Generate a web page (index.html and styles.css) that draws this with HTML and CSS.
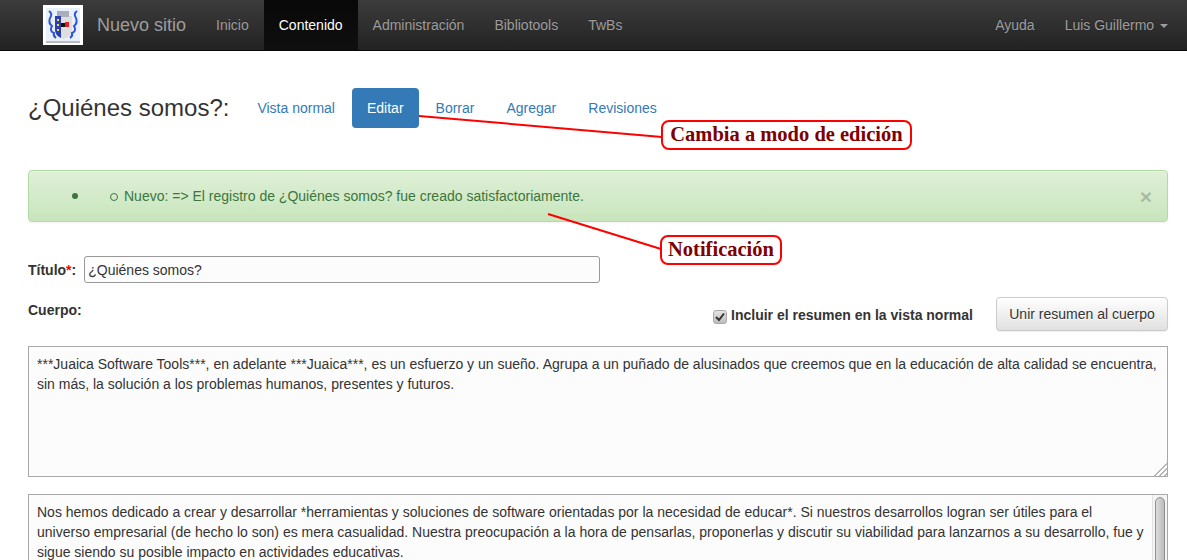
FILE: index.html
```html
<!doctype html>
<html lang="es">
  <head>
    <meta charset="UTF-8" />
    <meta name="viewport" content="width=device-width, initial-scale=1.0" />
    <title>¿Quiénes somos?</title>
    <link rel="stylesheet" href="styles.css">
  </head>

  <body>
    <nav class="navbar">
      <a class="brand" href="#">
        <svg class="logo" width="40" height="40" viewBox="0 0 40 40">
          <rect width="40" height="40" fill="#fff" />
          <rect x="3" y="3" width="34" height="33" fill="#e8f0fb" />
          <rect x="3" y="36" width="34" height="2" fill="#bdbdbd" />
          <path d="M12 11h17v14q0 6-8.500 9q-8.500-3-8.500-9z" fill="#dedede" />
          <path d="M14 6h12v6h-12z" fill="#a9aeb8" />
          <path d="M12 11h6v22q-6-3-6-8z" fill="#2a3fb0" />
          <rect x="14" y="14" width="2" height="2" fill="#f3df3a" />
          <rect x="14" y="19" width="2" height="2" fill="#f3df3a" />
          <rect x="14" y="24" width="2" height="2" fill="#f3df3a" />
          <rect x="18" y="18" width="4" height="4" fill="#111" />
          <rect x="22" y="17" width="4" height="5" fill="#e02020" />
          <path d="M6 6q4 3 1 7q-2 5 2 8q-3 5 2 7q-1 3 2 5" fill="none" stroke="#2f55d4" stroke-width="2" />
          <path d="M34 6q-4 3-1 7q2 5-2 8q3 5-2 7q1 3-2 5" fill="none" stroke="#2f55d4" stroke-width="2" />
        </svg>
        <span class="brand-name">Nuevo sitio</span>
      </a>
      <ul class="nav-links">
        <li><a href="#">Inicio</a></li>
        <li class="active"><a href="#">Contenido</a></li>
        <li><a href="#">Administración</a></li>
        <li><a href="#">Bibliotools</a></li>
        <li><a href="#">TwBs</a></li>
      </ul>
      <ul class="nav-links nav-right">
        <li><a href="#">Ayuda</a></li>
        <li><a href="#">Luis Guillermo <span class="caret"></span></a></li>
      </ul>
    </nav>

    <main class="page">
      <div class="title-row">
        <h1>¿Quiénes somos?:</h1>
        <ul class="pills">
          <li><a href="#">Vista normal</a></li>
          <li class="active"><a href="#">Editar</a></li>
          <li><a href="#">Borrar</a></li>
          <li><a href="#">Agregar</a></li>
          <li><a href="#">Revisiones</a></li>
        </ul>
      </div>

      <div class="alert">
        <ul>
          <li>
            <ul>
              <li>Nuevo: =&gt; El registro de ¿Quiénes somos? fue creado satisfactoriamente.</li>
            </ul>
          </li>
        </ul>
        <span class="close">×</span>
      </div>

      <div class="field-title">
        <label for="titulo">Título<span class="req">*</span>:</label>
        <input id="titulo" type="text" value="¿Quiénes somos?">
      </div>

      <div class="field-body">
        <label class="body-label">Cuerpo:</label>
        <label class="check">
          <span class="checkbox">
            <svg width="10" height="10" viewBox="0 0 10 10">
              <path d="M1 5l3 3l5-6.500" fill="none" stroke="#333" stroke-width="2" />
            </svg>
          </span>
          Incluir el resumen en la vista normal
        </label>
        <button class="btn" type="button">Unir resumen al cuerpo</button>
      </div>

      <div class="summary-wrap">
        <textarea class="summary">***Juaica Software Tools***, en adelante ***Juaica***, es un esfuerzo y un sueño. Agrupa a un puñado de alusinados que creemos que en la educación de alta calidad se encuentra, sin más, la solución a los problemas humanos, presentes y futuros.</textarea>
        <span class="grip"></span>
      </div>

      <div class="body-box">
        <p>Nos hemos dedicado a crear y desarrollar *herramientas y soluciones de software orientadas por la necesidad de educar*. Si nuestros desarrollos logran ser útiles para el universo empresarial (de hecho lo son) es mera casualidad. Nuestra preocupación a la hora de pensarlas, proponerlas y discutir su viabilidad para lanzarnos a su desarrollo, fue y sigue siendo su posible impacto en actividades educativas.</p>
        <div class="scroll-track"><div class="scroll-thumb"></div></div>
      </div>
    </main>

    <!-- anotaciones sobre la captura -->
    <svg class="arrows" width="1187" height="560">
      <line x1="419" y1="116" x2="662" y2="137" />
      <line x1="548" y1="214" x2="661" y2="249" />
    </svg>
    <div class="note note-edit">Cambia a modo de edición</div>
    <div class="note note-alert">Notificación</div>
  </body>
</html>
```

FILE: styles.css
```css
* {
  box-sizing: border-box;
}

html,
body {
  height: 560px;
  overflow: hidden;
}

body {
  margin: 0;
  position: relative;
  font-family: "Liberation Sans", Arial, sans-serif;
  font-size: 14px;
  line-height: 20px;
  color: #333;
  background-color: #fff;
}

a {
  text-decoration: none;
}

ul {
  margin: 0;
  padding: 0;
}

/* barra superior */
.navbar {
  display: flex;
  height: 51px;
  padding: 0 4px 0 28px;
  background-image: linear-gradient(to bottom, #3c3c3c 0, #222 100%);
  border-bottom: 1px solid #080808;
}

.brand {
  display: flex;
  align-items: center;
  height: 50px;
  padding: 0 15px;
  color: #9d9d9d;
}

.logo {
  display: block;
  margin-right: 14px;
}

.brand-name {
  font-size: 18px;
}

.nav-links {
  display: flex;
  list-style: none;
}

.nav-links a {
  display: block;
  height: 50px;
  padding: 15px;
  color: #9d9d9d;
  text-shadow: 0 -1px 0 rgba(0, 0, 0, 0.25);
}

.nav-links .active a {
  color: #fff;
  background-image: linear-gradient(to bottom, #080808 0, #0f0f0f 100%);
}

.nav-right {
  margin-left: auto;
}

.caret {
  display: inline-block;
  width: 0;
  height: 0;
  margin-left: 2px;
  vertical-align: middle;
  border-top: 4px solid;
  border-right: 4px solid transparent;
  border-left: 4px solid transparent;
}

/* contenido */
.page {
  padding: 37px 19px 0 28px;
}

.title-row {
  display: flex;
  align-items: center;
  gap: 13px;
  height: 40px;
}

h1 {
  margin: 0;
  font-size: 24px;
  font-weight: 400;
  line-height: 40px;
}

.pills {
  display: flex;
  gap: 2px;
  list-style: none;
}

.pills a {
  display: block;
  height: 40px;
  padding: 10px 15px;
  border-radius: 4px;
  color: #337ab7;
}

.pills .active a {
  color: #fff;
  background-color: #337ab7;
}

.alert {
  position: relative;
  height: 52px;
  margin-top: 42px;
  padding: 15px;
  color: #3c763d;
  background-image: linear-gradient(to bottom, #dff0d8 0, #c8e5bc 100%);
  border: 1px solid #b2dba1;
  border-radius: 4px;
  box-shadow: inset 0 1px 0 rgba(255, 255, 255, 0.25), 0 1px 2px rgba(0, 0, 0, 0.05);
}

.alert ul {
  padding-left: 40px;
  list-style: none;
}

.alert li {
  position: relative;
}

.alert li::before {
  content: "";
  position: absolute;
  top: 7px;
  left: -12px;
  width: 6px;
  height: 6px;
  background-color: #3c763d;
  border-radius: 50%;
}

.alert li li::before {
  left: -14px;
  background-color: transparent;
  border: 1px solid #3c763d;
}

.close {
  position: absolute;
  top: 16px;
  right: 15px;
  font-size: 21px;
  font-weight: 700;
  color: #000;
  opacity: 0.2;
}

.field-title {
  display: flex;
  align-items: center;
  gap: 8px;
  margin-top: 34px;
}

label {
  font-weight: 700;
}

.req {
  color: #f00;
}

input[type="text"] {
  width: 516px;
  height: 27px;
  padding: 1px 3px;
  font: inherit;
  color: #333;
  background-color: #fcfcfc;
  border: 1px solid #999;
  border-radius: 3px;
}

.field-body {
  display: flex;
  margin-top: 14px;
}

.body-label {
  flex: 1;
  padding-top: 3px;
}

.check {
  display: flex;
  align-items: center;
  gap: 4px;
  margin: 8px 23px 0 0;
  height: 20px;
}

.checkbox {
  display: flex;
  align-items: center;
  justify-content: center;
  width: 14px;
  height: 14px;
  margin-top: 3px;
  background-image: linear-gradient(to bottom, #e4e4e4, #bdbdbd);
  border: 1px solid #aaa;
  border-radius: 3px;
}

.btn {
  width: 172px;
  height: 34px;
  padding: 0;
  font: inherit;
  color: #333;
  background-image: linear-gradient(to bottom, #fff 0, #e0e0e0 100%);
  border: 1px solid #ccc;
  border-radius: 4px;
  box-shadow: inset 0 1px 0 rgba(255, 255, 255, 0.15), 0 1px 1px rgba(0, 0, 0, 0.075);
  text-shadow: 0 1px 0 #fff;
}

.summary-wrap {
  position: relative;
  margin-top: 15px;
}

.summary {
  display: block;
  width: 100%;
  height: 131px;
  padding: 7px 8px;
  font: inherit;
  color: #333;
  background-color: #fcfcfc;
  border: 1px solid #a9a9a9;
  border-radius: 0;
  resize: none;
}

.grip {
  position: absolute;
  right: 1px;
  bottom: 1px;
  width: 14px;
  height: 14px;
  background-image: repeating-linear-gradient(135deg, #b5b5b5 0, #b5b5b5 1.500px, transparent 1.500px, transparent 3.500px);
  clip-path: polygon(100% 0, 100% 100%, 0 100%);
}

.body-box {
  display: flex;
  height: 131px;
  margin-top: 17px;
  background-color: #fcfcfc;
  border: 1px solid #a9a9a9;
}

.body-box p {
  flex: 1;
  margin: 0;
  padding: 7px 8px;
}

.scroll-track {
  flex: none;
  width: 15px;
  padding: 2px 2px 2px 2px;
  background-color: #f5f5f5;
  border-left: 1px solid #e2e2e2;
}

.scroll-thumb {
  height: 100px;
  background-image: linear-gradient(to right, #dcdcdc, #bcbcbc);
  border: 1px solid #8f8f8f;
  border-radius: 5px;
}

/* anotaciones */
.arrows {
  position: absolute;
  top: 0;
  left: 0;
  pointer-events: none;
}

.arrows line {
  stroke: #f00;
  stroke-width: 2;
}

.note {
  position: absolute;
  height: 30px;
  font-family: "Liberation Serif", "DejaVu Serif", serif;
  font-size: 20.500px;
  font-weight: 700;
  line-height: 25px;
  color: #800000;
  text-align: center;
  white-space: nowrap;
  background-color: #fff;
  border: 2px solid #f00;
  border-radius: 8px;
}

.note-edit {
  top: 120px;
  left: 661px;
  width: 251px;
}

.note-alert {
  top: 235px;
  left: 660px;
  width: 122px;
}
```
